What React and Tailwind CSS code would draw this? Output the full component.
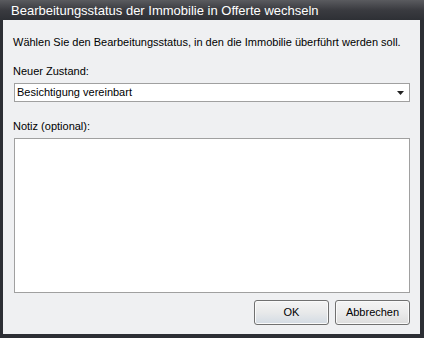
export default function App() {
  return (
    <div className="w-[424px] h-[338px] flex flex-col bg-[#2c2e34] pl-[3px] pb-[4px] pr-[4px]" style={{ fontFamily: '"Liberation Sans", Arial, sans-serif' }}>
      <div className="h-[20px] -ml-[3px] -mr-[4px] px-[11px] flex items-center bg-[linear-gradient(#5a5b5f,#3a3b40_50%,#2e3035)] text-white text-[13px] leading-none whitespace-nowrap">
        Bearbeitungsstatus der Immobilie in Offerte wechseln
      </div>
      <div className="flex-1 bg-[#eff0f2] flex flex-col pl-[11px] pr-[10px] text-[11px] text-black leading-none whitespace-nowrap">
        <div className="mt-[15px] h-[14px] flex items-center -ml-[1px]">Wählen Sie den Bearbeitungsstatus, in den die Immobilie überführt werden soll.</div>
        <div className="mt-[15px] h-[14px] flex items-center -ml-[1px]">Neuer Zustand:</div>
        <div className="mt-[5px] h-[19px] border border-[#a0a0a0] bg-white flex items-center justify-between pl-[2px] pr-[5px]">
          <span>Besichtigung vereinbart</span>
          <svg width="7" height="4" viewBox="0 0 7 4"><path d="M0 0h7L3.5 4z" fill="#222" /></svg>
        </div>
        <div className="mt-[17px] h-[14px] flex items-center -ml-[1px]">Notiz (optional):</div>
        <div className="mt-[5px] h-[155px] border border-[#a0a0a0] bg-white"></div>
        <div className="mt-[7px] flex justify-end gap-[6px]">
          <button className="w-[75px] h-[25px] rounded-[3px] border border-[#707070] bg-[linear-gradient(#f4f4f4,#e8e9ea_50%,#d3dbe4)] shadow-[inset_0_0_0_1px_#fafafa] text-[11px] leading-none">OK</button>
          <button className="w-[75px] h-[25px] rounded-[3px] border border-[#707070] bg-[linear-gradient(#f4f4f4,#ebebeb_50%,#dddddd)] shadow-[inset_0_0_0_1px_#fafafa] text-[11px] leading-none">Abbrechen</button>
        </div>
      </div>
    </div>
  );
}
